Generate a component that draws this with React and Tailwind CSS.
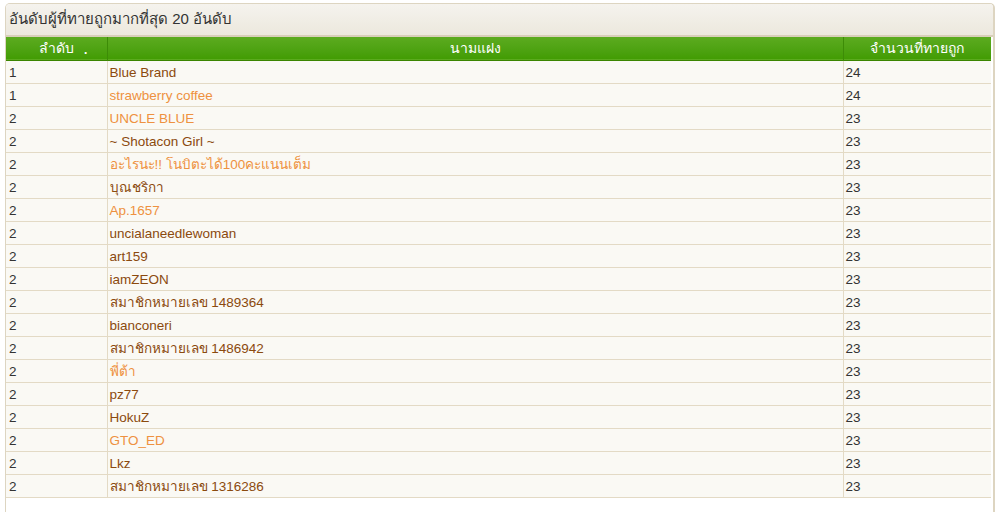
import React from 'react';

const rows = [
    { rank: 1, name: 'Blue Brand', score: 24, hot: false },
    { rank: 1, name: 'strawberry coffee', score: 24, hot: true },
    { rank: 2, name: 'UNCLE BLUE', score: 23, hot: true },
    { rank: 2, name: '~ Shotacon Girl ~', score: 23, hot: false },
    { rank: 2, name: 'อะไรนะ!! โนบิตะได้100คะแนนเต็ม', score: 23, hot: true },
    { rank: 2, name: 'บุณชริกา', score: 23, hot: false },
    { rank: 2, name: 'Ap.1657', score: 23, hot: true },
    { rank: 2, name: 'uncialaneedlewoman', score: 23, hot: false },
    { rank: 2, name: 'art159', score: 23, hot: false },
    { rank: 2, name: 'iamZEON', score: 23, hot: false },
    { rank: 2, name: 'สมาชิกหมายเลข 1489364', score: 23, hot: false },
    { rank: 2, name: 'bianconeri', score: 23, hot: false },
    { rank: 2, name: 'สมาชิกหมายเลข 1486942', score: 23, hot: false },
    { rank: 2, name: 'พี่ต้า', score: 23, hot: true },
    { rank: 2, name: 'pz77', score: 23, hot: false },
    { rank: 2, name: 'HokuZ', score: 23, hot: false },
    { rank: 2, name: 'GTO_ED', score: 23, hot: true },
    { rank: 2, name: 'Lkz', score: 23, hot: false },
    { rank: 2, name: 'สมาชิกหมายเลข 1316286', score: 23, hot: false },
];

const App = () => {
    return (
        <div className="w-[1004px] h-[512px] bg-white pt-[3px] pl-[5px] overflow-hidden font-['Tahoma','Liberation_Sans','DejaVu_Sans',sans-serif]">
            <div className="w-[990px] h-[530px] border-l border-r-[2px] border-t border-[#ddd5c1] rounded-t-[5px] bg-white overflow-hidden">
                <div className="h-[33px] bg-gradient-to-b from-[#f5f3ee] to-[#ece8dd] border-b-[2px] border-[#d8cfb9] flex items-center pl-[3px] text-[15px] text-[#333]">
                    อันดับผู้ที่ทายถูกมากที่สุด 20 อันดับ
                </div>
                <div className="h-[461px] overflow-hidden">
                    <table className="w-[985px] border-collapse table-fixed text-[13.5px] leading-[18px]">
                        <colgroup>
                            <col className="w-[101px]" />
                            <col className="w-[736px]" />
                            <col className="w-[148px]" />
                        </colgroup>
                        <thead>
                            <tr className="h-[23px] bg-gradient-to-b from-[#5cab1f] to-[#429c03] text-white text-[14px] border-b border-[#3a8500]">
                                <th className="font-normal border-r border-[#3d8c07] relative">
                                    ลำดับ
                                    <span className="absolute left-[78px] top-[4px] text-[12px] font-bold">.</span>
                                </th>
                                <th className="font-normal border-r border-[#3d8c07]">นามแฝง</th>
                                <th className="font-normal">จำนวนที่ทายถูก</th>
                            </tr>
                        </thead>
                        <tbody>
                            {rows.map((r, i) => (
                                <tr key={i} className="h-[23px] bg-[#faf9f4] border-b border-[#e3dac5]">
                                    <td className="pl-[3px] pt-[2px] text-[#333] border-r border-[#e3dac5]">{r.rank}</td>
                                    <td className={`pl-[2px] pt-[2px] border-r border-[#e3dac5] ${r.hot ? 'text-[#ee9140]' : 'text-[#8b4a0e]'}`}>{r.name}</td>
                                    <td className="pl-[2px] pt-[2px] text-[#333]">{r.score}</td>
                                </tr>
                            ))}
                        </tbody>
                    </table>
                </div>
            </div>
        </div>
    );
};

export default App;
